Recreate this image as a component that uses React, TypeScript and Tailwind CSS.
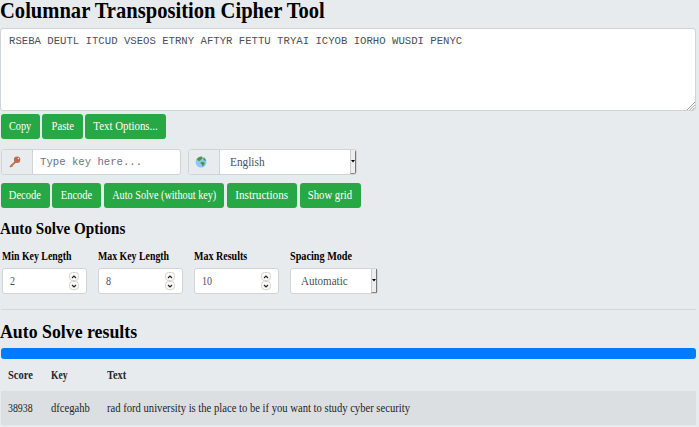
import React from "react";

const serif = "font-['Liberation_Serif',serif]";
const mono = "font-['Liberation_Mono',monospace] text-[11.5px]";

function Narrow({ children, scale, size = "" }: { children: React.ReactNode; scale: string; size?: string }) {
  return <span className={`inline-block origin-left whitespace-pre ${scale} ${size}`}>{children}</span>;
}

function Button({ label, size, scale }: { label: string; size: string; scale: string }) {
  return (
    <button
      className={`flex h-[25px] shrink-0 items-center justify-center rounded-[3px] bg-[#28a745] pb-px text-[13px] whitespace-nowrap text-white ${size}`}
    >
      <span className={`shrink-0 ${scale}`}>{label}</span>
    </button>
  );
}

function Chevron({ d }: { d: string }) {
  return (
    <span className="flex h-[9px] w-[10px] items-center justify-center rounded-[3.5px] border border-[#d8d2cc] bg-[#fafafa]">
      <svg viewBox="0 0 6 4" className="h-[4px] w-[6px]" fill="none" stroke="#222" strokeWidth="1.2">
        <path d={d} />
      </svg>
    </span>
  );
}

function FieldLabel({ label, scale }: { label: string; scale: string }) {
  return (
    <div className="h-[19px] text-[12px] leading-[14px] font-bold text-black">
      <Narrow scale={scale}>{label}</Narrow>
    </div>
  );
}

function NumberField({ label, value, scale }: { label: string; value: string; scale: string }) {
  return (
    <div className="w-[85px]">
      <FieldLabel label={label} scale={scale} />
      <div className="flex h-[26px] items-center justify-between rounded-[3px] border border-[#ced4da] bg-white pr-[7px] pl-[7px] text-[11.5px] text-[#495057]">
        <Narrow scale="scale-x-[0.87]" size="pt-px">{value}</Narrow>
        <span className="flex flex-col">
          <Chevron d="M1 3 3 1 5 3" />
          <Chevron d="M1 1 3 3 5 1" />
        </span>
      </div>
    </div>
  );
}

function SelectArrow() {
  return (
    <span className="flex h-full w-[6px] items-center justify-center border-r border-b border-l border-r-[#777] border-b-[#888] border-l-[#ccc] bg-[#eeeeee]">
      <svg viewBox="0 0 4 3" className="h-[3px] w-[4px] shrink-0">
        <path d="M0 0H4L2 2.6Z" fill="#000" />
      </svg>
    </span>
  );
}

export default function App() {
  return (
    <main className={`h-[427px] w-[699px] overflow-hidden bg-[#e8ebee] pl-px ${serif}`}>
      <h1 className="-ml-px h-[28px] text-[22.5px] leading-[22px] font-bold text-black">
        <Narrow scale="scale-x-[0.914]">Columnar Transposition Cipher Tool</Narrow>
      </h1>
      <div className={`relative -ml-px h-[83px] w-[696px] rounded-[3px] border border-[#ced4da] bg-white pt-[5px] pl-[8px] leading-[13px] text-[#495057] ${mono}`}>
        <Narrow scale="scale-x-[0.925]">RSEBA DEUTL ITCUD VSEOS ETRNY AFTYR FETTU TRYAI ICYOB IORHO WUSDI PENYC</Narrow>
        <svg viewBox="0 0 8 8" className="absolute right-0 bottom-0 h-[8px] w-[8px]" stroke="#858585" strokeWidth="0.8">
          <path d="M0 8 8 0M2.7 8 8 2.7M5.4 8 8 5.4" />
        </svg>
      </div>
      <div className="flex gap-[2px] pt-[2.5px]">
        <Button label="Copy" size="w-[39px]" scale="scale-x-[0.79]" />
        <Button label="Paste" size="w-[40.5px]" scale="scale-x-[0.82]" />
        <Button label="Text Options..." size="w-[81.5px]" scale="scale-x-[0.835]" />
      </div>
      <div className="mt-[10.5px] flex h-[26px] gap-[7px]">
        <div className="flex w-[180px] overflow-hidden rounded-[3px] border border-[#ced4da] bg-white">
          <div className="flex w-[31px] shrink-0 items-center border-r border-[#ced4da] bg-[#e9ecef] pl-[7px]">
            <svg viewBox="0 0 12 12" className="h-[12px] w-[12px]" fill="none">
              <path d="M1.6 10.4 7 5.4" stroke="#c1694f" strokeWidth="1.9" strokeLinecap="round" />
              <path d="m2.6 9.7 1 1" stroke="#c1694f" strokeWidth="1" />
              <circle cx="8.1" cy="3.8" r="3.2" fill="#c1694f" />
              <circle cx="9.4" cy="2.5" r=".7" fill="#e9ecef" />
            </svg>
          </div>
          <div className={`pt-[5px] pl-[7px] leading-[13px] text-[#6c757d] ${mono}`}>
            <Narrow scale="scale-x-[0.925]">Type key here...</Narrow>
          </div>
        </div>
        <div className="flex w-[168.5px] overflow-hidden rounded-[3px] border border-[#ced4da] bg-white">
          <div className="flex w-[31px] shrink-0 items-center border-r border-[#ced4da] bg-[#e9ecef] pl-[6px]">
            <svg viewBox="0 0 12 12" className="h-[12px] w-[12px]">
              <circle cx="6" cy="6" r="5.5" fill="#88c9f9" />
              <path d="M1.8 3.2C3 1.4 4.6.6 6.5.6L7.6 2 6.6 3.3 5.8 4 5 4.8 4 5.3 3 4.6Z" fill="#5c913b" />
              <path d="M5.8 6.1 8 5.8 10 7.1 8.9 9 7.6 10.8 6.9 8.6 5.7 7.6ZM9 1.6 11 4 10.2 5 8.9 4.2 8.2 3Z" fill="#5c913b" />
            </svg>
          </div>
          <div className="flex flex-1 items-center justify-between pl-[10px] text-[13px] text-[#495057]">
            <Narrow scale="scale-x-[0.87]">English</Narrow>
            <SelectArrow />
          </div>
        </div>
      </div>
      <div className="mt-[8px] flex gap-[2.5px]">
        <Button label="Decode" size="w-[48.5px]" scale="scale-x-[0.81]" />
        <Button label="Encode" size="w-[49px]" scale="scale-x-[0.81]" />
        <Button label="Auto Solve (without key)" size="w-[120.5px]" scale="scale-x-[0.785]" />
        <Button label="Instructions" size="w-[70.5px]" scale="scale-x-[0.86]" />
        <Button label="Show grid" size="w-[61.5px]" scale="scale-x-[0.82]" />
      </div>
      <h2 className="-ml-px mt-[12px] h-[29px] text-[16.5px] leading-[18px] font-bold text-black">
        <Narrow scale="scale-x-[0.918]">Auto Solve Options</Narrow>
      </h2>
      <div className="flex gap-[11px] pl-[1.4px]">
        <NumberField label="Min Key Length" value="2" scale="scale-x-[0.82]" />
        <NumberField label="Max Key Length" value="8" scale="scale-x-[0.82]" />
        <NumberField label="Max Results" value="10" scale="scale-x-[0.835]" />
        <div className="-ml-[0.5px] w-[88.5px]">
          <FieldLabel label="Spacing Mode" scale="scale-x-[0.85]" />
          <div className="flex h-[26px] items-center justify-between rounded-[3px] border border-[#ced4da] bg-white pl-[10px] text-[13px] text-[#495057]">
            <Narrow scale="scale-x-[0.85]">Automatic</Narrow>
            <SelectArrow />
          </div>
        </div>
      </div>
      <div className="mt-[15px] h-px w-[695px] bg-[#d6d9dc]" />
      <h2 className="-ml-px mt-[11px] h-[27px] text-[19.5px] leading-[22px] font-bold text-black">
        <Narrow scale="scale-x-[0.913]">Auto Solve results</Narrow>
      </h2>
      <div className="h-[11px] w-[695px] rounded-[3px] bg-[#007bff]" />
      <div className="w-[695px] text-[12.5px] text-[#212529]">
        <div className="flex h-[32px] items-center pl-[7px] font-bold">
          <span className="w-[43px]"><Narrow scale="scale-x-[0.84]">Score</Narrow></span>
          <span className="w-[55.5px]"><Narrow scale="scale-x-[0.77]">Key</Narrow></span>
          <Narrow scale="scale-x-[0.83]">Text</Narrow>
        </div>
        <div className="flex h-[34px] items-center bg-[#dcdfe2] pl-[7px]">
          <span className="w-[43px]"><Narrow scale="scale-x-[0.82]" size="text-[12px]">38938</Narrow></span>
          <span className="w-[55.5px]"><Narrow scale="scale-x-[0.85]">dfcegahb</Narrow></span>
          <Narrow scale="scale-x-[0.849]">rad ford university is the place to be if you want to study cyber security</Narrow>
        </div>
      </div>
    </main>
  );
}
